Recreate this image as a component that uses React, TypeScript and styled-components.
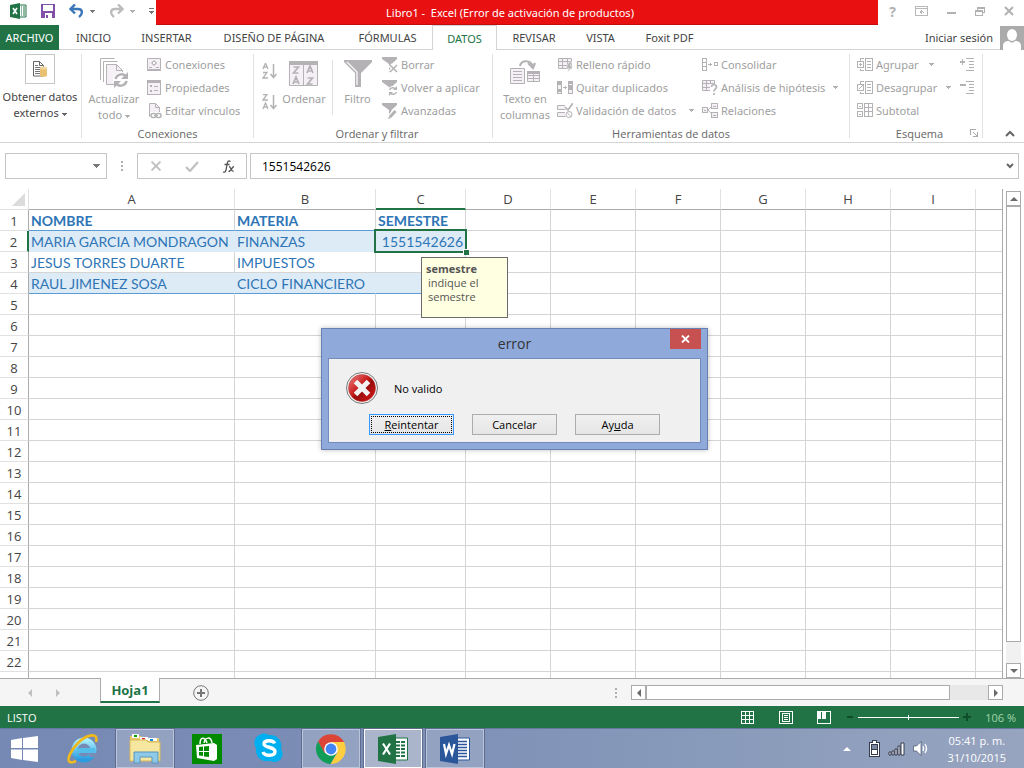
import React from "react";
import styled, { createGlobalStyle, css } from "styled-components";

const ui = `"Open Sans", "Noto Sans", sans-serif`;
const command = `"Noto Sans", "Open Sans", sans-serif`;
const sheet = `Lato, "Open Sans", sans-serif`;

const Global = createGlobalStyle`
  *, *::before, *::after { box-sizing: border-box; }
  html, body, #root { height: 100%; }
  body { margin: 0; font-family: ${ui}; font-size: 11px; color: #444; background: #fff; overflow: hidden; }
  button, input { font: inherit; color: inherit; margin: 0; padding: 0; border: 0; background: none; border-radius: 0; }
`;

const Window = styled.div`
  position: relative;
  display: flex;
  flex-direction: column;
  height: 100vh;
`;

/* ---------- title bar ---------- */
const TitleBar = styled.header`
  display: flex;
  height: 25px;
  font-family: ${command};
`;
const QuickAccess = styled.div`
  display: flex;
  align-items: center;
  width: 156px;
  padding-left: 10px;
  gap: 14px;
  padding-bottom: 3px;
`;
const QuickButton = styled.button`
  display: flex;
  align-items: center;
  gap: 6px;
`;
const TitleText = styled.h1`
  flex: 1;
  margin: 0;
  padding-right: 14px;
  background: #e81010;
  border-bottom: 1px solid #c40e0e;
  color: #fff;
  font-size: 11px;
  font-weight: 400;
  line-height: 25px;
  text-align: center;
  white-space: pre;
`;
const WindowButtons = styled.div`
  display: flex;
  width: 146px;
  padding-bottom: 3px;
`;
const WindowButton = styled.button`
  display: flex;
  flex: 1;
  align-items: center;
  justify-content: center;
  color: #b1b1b1;
  font-size: 14px;
  font-weight: 700;
`;

/* ---------- ribbon tabs ---------- */
const TabRow = styled.nav`
  display: flex;
  height: 25px;
  border-bottom: 1px solid #d4d4d4;
  font-family: ${command};
`;
const Tab = styled.button<{ $w: number; $kind?: "file" | "active" }>`
  width: ${(p) => p.$w}px;
  height: 25px;
  white-space: nowrap;
  ${(p) => p.$kind === "file" && css`background: #217346; color: #fff;`}
  ${(p) =>
    p.$kind === "active" &&
    css`
      background: #fff;
      color: #217346;
      border: 1px solid #d4d4d4;
      border-bottom: 0;
    `}
`;
const Account = styled.button`
  display: flex;
  align-items: center;
  gap: 7px;
  height: 25px;
  margin-left: auto;
`;

/* ---------- ribbon ---------- */
const Ribbon = styled.section`
  display: flex;
  height: 93px;
  padding-top: 4px;
  border-bottom: 1px solid #d4d4d4;
`;
const Group = styled.section<{ $w: number; $pad?: number }>`
  position: relative;
  display: flex;
  flex-direction: column;
  width: ${(p) => p.$w}px;
  height: 84px;
  padding-left: ${(p) => p.$pad || 0}px;
  border-right: 1px solid #e1e1e1;
`;
const GroupBody = styled.div`
  display: flex;
  flex: none;
  height: 72px;
  margin-top: -1px;
  font-family: ${command};
`;
const GroupLabel = styled.h2`
  flex: none;
  margin: 0;
  font-size: 11px;
  font-weight: 400;
  line-height: 18px;
  text-align: center;
  color: #666;
`;
const BigButton = styled.button<{ $w: number; $dark?: boolean }>`
  display: flex;
  flex-direction: column;
  align-items: center;
  width: ${(p) => p.$w}px;
  height: 72px;
  padding-top: ${(p) => (p.$dark ? 1 : 5)}px;
  gap: ${(p) => (p.$dark ? 5 : 3)}px;
  line-height: 16px;
  color: ${(p) => (p.$dark ? "#444" : "#a0a0a0")};
  white-space: nowrap;
  & span svg {
    vertical-align: middle;
  }
`;
const IconFrame = styled.span`
  display: flex;
  align-items: center;
  justify-content: center;
  width: 30px;
  height: 30px;
  border: 1px solid #c6c6c6;
`;
const IconSlot = styled.i`
  display: flex;
  align-items: center;
  height: 30px;
`;
const SmallColumn = styled.div<{ $w?: number }>`
  display: flex;
  flex-direction: column;
  width: ${(p) => (p.$w ? p.$w + "px" : "auto")};
`;
const SmallButton = styled.button`
  display: flex;
  align-items: center;
  gap: 3px;
  height: 23px;
  color: #a0a0a0;
  white-space: nowrap;
`;
const SmallLabel = styled.span<{ $w?: number }>`
  text-align: left;
  min-width: ${(p) => p.$w || 0}px;
`;
const SortColumn = styled.div`
  display: flex;
  flex-direction: column;
  justify-content: space-between;
  width: 20px;
  height: 57px;
  padding-top: 10px;
`;
const InnerRule = styled.span`
  width: 1px;
  height: 55px;
  margin-top: 7px;
  margin-left: 6px;
  background: #e1e1e1;
`;
const Launcher = styled.button`
  position: absolute;
  right: 4px;
  bottom: 0;
  height: 9px;
  display: flex;
`;
const Collapse = styled.button`
  align-self: flex-end;
  margin: 0 9px 5px auto;
  display: flex;
`;

/* ---------- formula bar ---------- */
const FormulaRow = styled.div`
  display: flex;
  height: 46px;
  padding: 10px 5px;
`;
const Box = styled.div<{ $w?: number; $ml?: number }>`
  display: flex;
  align-items: center;
  flex: ${(p) => (p.$w ? "none" : 1)};
  width: ${(p) => (p.$w ? p.$w + "px" : "auto")};
  height: 26px;
  margin-left: ${(p) => p.$ml || 0}px;
  border: 1px solid #c6c6c6;
`;
const NameInput = styled.input`
  flex: 1;
  min-width: 0;
  height: 22px;
  padding-left: 4px;
`;
const FormulaInput = styled.input`
  flex: 1;
  min-width: 0;
  height: 22px;
  padding-left: 11px;
  font-size: 12px;
  color: #000;
`;
const BarButton = styled.button`
  display: flex;
  justify-content: center;
  flex: 1;
`;
const ArrowButton = styled.button<{ $w: number }>`
  display: flex;
  align-items: center;
  justify-content: center;
  width: ${(p) => p.$w}px;
`;
const Grip = styled.span`
  display: flex;
  align-items: center;
  justify-content: center;
  width: 30px;
  height: 26px;
`;

/* ---------- sheet ---------- */
const SheetArea = styled.main`
  display: flex;
  flex: 1;
  min-height: 0;
`;
const GridView = styled.div`
  flex: 1;
  min-width: 0;
  border-right: 1px solid #ababab;
  overflow: hidden;
`;
const Grid = styled.table`
  width: 100%;
  table-layout: fixed;
  border-spacing: 0;
  font-family: ${sheet};
  font-size: 14px;
  color: #2e75b6;
`;
const ColHead = styled.th<{ $on?: boolean }>`
  height: 21px;
  padding: 0;
  border-right: 1px solid #e1e1e1;
  border-bottom: ${(p) => (p.$on ? "2px solid #217346" : "1px solid #ababab")};
  font-family: ${ui};
  font-size: 13px;
  line-height: 18px;
  font-weight: 400;
  color: #444;
  &:last-child {
    border-right: 0;
  }
`;
const Corner = styled(ColHead)`
  padding-left: 12px;
  border-bottom-color: #e1e1e1;
  line-height: 0;
  text-align: left;
`;
const RowHead = styled.th<{ $on?: boolean }>`
  height: 21px;
  padding: 2px 0 0;
  border-right: ${(p) => (p.$on ? "2px solid #217346" : "1px solid #ababab")};
  border-bottom: 1px solid #e1e1e1;
  font-family: ${ui};
  font-size: 13px;
  line-height: 18px;
  font-weight: 400;
  color: #444;
`;
const Cell = styled.td<{ $fill?: boolean; $bold?: boolean; $blue?: boolean; $active?: boolean }>`
  position: ${(p) => (p.$active ? "relative" : "static")};
  height: 21px;
  padding: 2px 2px 0;
  line-height: 18px;
  white-space: nowrap;
  text-align: ${(p) => (p.$active ? "right" : "left")};
  font-weight: ${(p) => (p.$bold ? 700 : 400)};
  background: ${(p) => (p.$fill ? "#ddebf7" : "#fff")};
  border-right: 1px solid ${(p) => (p.$fill ? "#ddebf7" : "#d4d4d4")};
  border-bottom: 1px solid ${(p) => (p.$blue ? "#5b9bd5" : p.$fill ? "#ddebf7" : "#d4d4d4")};
  &:last-child {
    border-right: 0;
  }
`;
const Selection = styled.span`
  position: absolute;
  z-index: 1;
  inset: -2px;
  border: 2px solid #217346;
  &::after {
    content: "";
    position: absolute;
    right: -4px;
    bottom: -4px;
    width: 6px;
    height: 6px;
    background: #217346;
    border: 1px solid #fff;
    border-width: 1px 0 0 1px;
  }
`;
const Hint = styled.div`
  position: absolute;
  z-index: 2;
  left: 45px;
  top: 26px;
  width: 87px;
  height: 61px;
  padding: 4px;
  border: 1px solid #6b6b6b;
  background: #ffffe1;
  font-family: ${ui};
  font-size: 11px;
  line-height: 14px;
  color: #555;
  text-align: left;
  white-space: normal;
`;
const HintText = styled.p`
  margin: 0;
  padding-left: 2px;
`;
const VScroll = styled.div`
  display: flex;
  flex-direction: column;
  width: 15px;
  margin: 2px 3px 0 3px;
  background: #f1f1f1;
`;
const HScroll = styled.div`
  display: flex;
  flex: 0 1 372px;
  height: 15px;
  margin-right: 21px;
  background: #e8e8e8;
`;
const ScrollButton = styled.button`
  display: flex;
  align-items: center;
  justify-content: center;
  flex: none;
  width: 15px;
  height: 15px;
  background: #fff;
  border: 1px solid #ababab;
`;
const ThumbTrack = styled.div<{ $end: number; $vertical?: boolean }>`
  display: flex;
  flex: 1;
  padding: ${(p) => (p.$vertical ? `0 0 ${p.$end}px` : `0 ${p.$end}px 0 0`)};
`;
const Thumb = styled.div`
  flex: 1;
  background: #fff;
  border: 1px solid #ababab;
`;

/* ---------- sheet tabs and status ---------- */
const SheetTabs = styled.div`
  display: flex;
  align-items: center;
  height: 28px;
  background: #f5f5f5;
  border-top: 1px solid #ababab;
`;
const TabArrows = styled.div`
  display: flex;
  justify-content: center;
  gap: 20px;
  width: 100px;
  padding-right: 13px;
`;
const PlainButton = styled.button`
  display: flex;
`;
const SheetTab = styled.button`
  align-self: flex-start;
  width: 60px;
  height: 25px;
  margin-top: -1px;
  background: #fff;
  border: solid #ababab;
  border-width: 0 1px 2px;
  border-bottom-color: #217346;
  color: #217346;
  font-size: 13px;
  font-weight: 700;
`;
const AddSheet = styled.button`
  display: flex;
  margin-left: 33px;
`;
const Spacer = styled.span`
  flex: 1;
`;
const StatusBar = styled.footer`
  display: flex;
  align-items: center;
  height: 22px;
  padding: 0 8px 0 7px;
  background: #217346;
  color: #fff;
`;
const Views = styled.div`
  display: flex;
  gap: 24px;
  margin-right: 14px;
`;
const ZoomStep = styled.button`
  width: 10px;
  display: flex;
  justify-content: center;
`;
const ZoomRange = styled.input`
  appearance: none;
  width: 101px;
  height: 7px;
  margin: 0 3px;
  background: linear-gradient(#fff, #fff) center / 100% 1px no-repeat;
  &::-webkit-slider-thumb {
    appearance: none;
    width: 1px;
    height: 5px;
    background: #fff;
  }
`;
const ZoomText = styled.span`
  width: 44px;
  text-align: right;
  color: #a3d3a9;
`;

/* ---------- task bar ---------- */
const TaskBar = styled.footer`
  display: flex;
  height: 40px;
  background: linear-gradient(90deg, #7589b4 0%, #7c8db5 35%, #8699ba 65%, #97a4bf 100%);
  border-top: 1px solid #66789f;
`;
const StartButton = styled.button`
  display: flex;
  align-items: center;
  justify-content: center;
  width: 48px;
  margin-right: 6px;
`;
const TaskButton = styled.button<{ $state?: "open" | "active" }>`
  display: flex;
  align-items: center;
  justify-content: center;
  width: 58px;
  height: 39px;
  margin-right: 4px;
  ${(p) =>
    p.$state &&
    css`
      background: ${p.$state === "active" ? "#aab4cb" : "#94a2c2"};
      border: 1px solid ${p.$state === "active" ? "#fff" : "#bac4da"};
      box-shadow: 0 0 0 1px #5d6c8f;
    `}
`;
const Tray = styled.div`
  display: flex;
  align-items: center;
  gap: 8px;
  margin-left: auto;
  padding-right: 18px;
  color: #fff;
`;
const TrayMore = styled.button`
  display: flex;
  margin-right: 10px;
`;
const Clock = styled.time`
  margin-left: 11px;
  font-size: 11px;
  line-height: 17px;
  text-align: center;
`;

/* ---------- dialog ---------- */
const Dialog = styled.div`
  position: absolute;
  z-index: 3;
  left: 321px;
  top: 328px;
  width: 387px;
  padding: 0 6px 6px;
  background: #8fa9db;
  border: 1px solid #6a80b0;
  box-shadow: 0 0 5px rgba(0, 0, 0, 0.25);
`;
const DialogTitle = styled.div`
  display: flex;
  height: 29px;
`;
const DialogName = styled.h2`
  flex: 1;
  margin: 0;
  padding-left: 31px;
  font-size: 14px;
  font-weight: 400;
  line-height: 30px;
  text-align: center;
  color: #333;
`;
const CloseButton = styled.button`
  display: flex;
  align-items: center;
  justify-content: center;
  width: 31px;
  height: 20px;
  background: #c75050;
`;
const DialogBody = styled.div`
  padding: 13px 17px 7px;
  background: #f0f0f0;
  border: 1px solid #748cba;
`;
const Message = styled.div`
  display: flex;
  align-items: center;
  gap: 16px;
  color: #000;
`;
const DialogButtons = styled.div`
  display: flex;
  gap: 18px;
  margin-top: 10px;
  padding-left: 23px;
`;
const DialogButton = styled.button<{ $focus?: boolean }>`
  width: 85px;
  height: 21px;
  padding: 1px;
  border: 1px solid ${(p) => (p.$focus ? "#3399ff" : "#acacac")};
  background: linear-gradient(#f0f0f0, #e5e5e5);
  color: #000;
  line-height: 15px;
`;
const FocusLine = styled.span<{ $focus?: boolean }>`
  display: block;
  border: 1px dotted ${(p) => (p.$focus ? "#000" : "transparent")};
`;

/* ---------- drawings ---------- */
type SvgProps = { w: number; h: number; children: React.ReactNode; soft?: boolean };
const Svg = ({ w, h, children, soft }: SvgProps) => (
  <svg width={w} height={h} viewBox={`0 0 ${w} ${h}`} fill="none" shapeRendering={soft ? "auto" : "crispEdges"} aria-hidden="true">
    {children}
  </svg>
);
const G = "#b5b2b5";
const P = "#f4f0f5";

const Down = ({ c = "#b0b0b0" }: { c?: string }) => (
  <Svg w={5} h={3}><path d="M0 0h5v1H0zM1 1h3v1H1zM2 2h1v1H2z" fill={c} /></Svg>
);
const BigDown = () => <Svg w={7} h={4}><path d="M0 0h7v1H0zM1 1h5v1H1zM2 2h3v1H2zM3 3h1v1H3z" fill="#777" /></Svg>;
const Tri = ({ dir, c = "#6a6a6a" }: { dir: "up" | "down" | "left" | "right"; c?: string }) => (
  <Svg w={8} h={8} soft>
    <path fill={c} d={{ up: "M0 6l4-4 4 4z", down: "M0 2h8l-4 4z", left: "M6 0v8l-4-4z", right: "M2 0v8l4-4z" }[dir]} />
  </Svg>
);
const Dots = () => <Svg w={2} h={10}><path d="M0 0h2v2H0zM0 4h2v2H0zM0 8h2v2H0z" fill="#b0b0b0" /></Svg>;

const ExcelMini = () => (
  <Svg w={17} h={16} soft>
    <path d="M9 2h7v12H9z" fill="#fff" stroke="#217346" />
    <path d="M11 4h1M13 4h2M11 6h1M13 6h2M11 8h1M13 8h2M11 10h1M13 10h2M11 12h1M13 12h2" stroke="#217346" />
    <path d="M0 2l10-2v16L0 14z" fill="#217346" />
    <path d="M3 5l4 6M7 5l-4 6" stroke="#fff" strokeWidth="1.6" />
  </Svg>
);
const Save = () => (
  <Svg w={14} h={14}>
    <path d="M0 0h14v14H0z" fill="#8250a8" /><path d="M2 1h10v6H2zM4 9h7v5H4z" fill="#fff" /><path d="M5 11h2v3H5z" fill="#8250a8" />
  </Svg>
);
const Undo = ({ c, flip }: { c: string; flip?: boolean }) => (
  <Svg w={15} h={14} soft>
    <g transform={flip ? "matrix(-1 0 0 1 15 0)" : undefined}>
      <path d="M2 5h7c5 0 5 5 1 8M6 .5L1.500 5 6 9.500" stroke={c} strokeWidth="2.400" />
    </g>
  </Svg>
);
const Customize = () => <Svg w={5} h={6}><path d="M0 0h5v1H0zM0 3h5v1H0zM1 4h3v1H1zM2 5h1v1H2z" fill="#777" /></Svg>;
const RibbonOptions = () => (
  <Svg w={13} h={10}><path d="M.5.5h12v9H.5zM.5 2.500h12M6.500 4v4M4.500 6h1M7.500 6h1M5 5.500h3" stroke="#b8b8b8" /></Svg>
);
const Restore = () => (
  <Svg w={10} h={9}><path d="M2.500 2.500v-2h7v5h-2M.5 3.500h7v5h-7zM0 3.500h8M2 .5h8" stroke="#b1b1b1" /><path d="M2 1h8M0 4h8" stroke="#b1b1b1" strokeWidth="1" /></Svg>
);
const CloseGrey = () => <Svg w={10} h={10} soft><path d="M1 1l8 8M9 1L1 9" stroke="#b1b1b1" strokeWidth="2" /></Svg>;
const Avatar = () => (
  <Svg w={24} h={24} soft>
    <path d="M0 0h24v24H0z" fill="#ababab" /><ellipse cx="12" cy="9" rx="5" ry="6" fill="#fff" />
    <path d="M3 24v-4c0-4 3-5 6-5 2 2 4 2 6 0 4 0 6 2 6 5v4z" fill="#fff" />
  </Svg>
);
const GetData = () => (
  <Svg w={14} h={16} soft>
    <path d="M.5.5h6l4 4V15H.5z" fill="#fff" stroke="#666" /><path d="M6.500.5v4h4" stroke="#666" />
    <path d="M2 4.500h3M2 6.500h6M2 8.500h5M2 10.500h5M2 12.500h5" stroke="#777" />
    <path d="M7 7h7v8c-1 1-6 1-7 0z" fill="#e9c173" /><ellipse cx="10.500" cy="7" rx="3.500" ry="1.500" fill="#f3d79d" />
  </Svg>
);
const RefreshAll = () => (
  <Svg w={30} h={30} soft>
    <path d="M1.500 22V.5h14M4.500 24V3.500h14" stroke={G} />
    <path d="M7.500 6.500h10l6 6v14h-16z" fill={P} stroke={G} /><path d="M17.500 6.500v6h6" stroke={G} />
    <circle cx="22" cy="22" r="8" fill="#fff" />
    <path d="M16.500 21a6 6 0 0 1 10-3M27.500 23a6 6 0 0 1-10 3" stroke={G} strokeWidth="2.500" />
    <path d="M29 14v7h-7zM15 30v-7h7z" fill={G} />
  </Svg>
);
const Connections = () => (
  <Svg w={16} h={14} soft>
    <path d="M1.500.5h13v11h-13z" fill={P} stroke={G} /><path d="M8 2l3 3-3 3-3-3z" fill={G} /><path d="M7 4h2v2H7z" fill="#fff" />
    <path d="M1 12.500h14M3 9.500h3M10 9.500h3" stroke={G} />
  </Svg>
);
const Properties = () => (
  <Svg w={16} h={15}>
    <path d="M1.500.5h13v14h-13z" fill={P} stroke={G} /><path d="M1 0h14v3H1z" fill={G} />
    <path d="M4 6.500h2M4 10.500h2M8 6.500h4M8 10.500h4M4 5.500h2M4 11.500h2" stroke={G} />
  </Svg>
);
const Links = () => (
  <Svg w={16} h={16} soft>
    <path d="M3.500.5h6l4 4v9h-10z" fill={P} stroke={G} /><path d="M9.500.5v4h4" stroke={G} />
    <path d="M4 9h12v7H4z" fill="#fff" />
    <rect x="5" y="10.500" width="5" height="4" rx="2" stroke={G} strokeWidth="1.500" /><rect x="10" y="10.500" width="5" height="4" rx="2" stroke={G} strokeWidth="1.500" />
    <path d="M8 12.500h4" stroke={G} />
  </Svg>
);
const A = (x: number, y: number) => `M${x} ${y + 6}l2.500-6 2.500 6M${x + 1} ${y + 4}h3`;
const Z = (x: number, y: number) => `M${x} ${y + 0.5}h4l-4 5.500h5`;
const SortIcon = ({ down }: { down?: boolean }) => (
  <Svg w={15} h={16} soft>
    <path d={down ? Z(1, 0) + A(1, 9) : A(1, 0) + Z(1, 9)} stroke={G} strokeWidth="1.300" />
    <path d="M11.500 1v13M8.500 11l3 3.500 3-3.500" stroke={G} strokeWidth="1.500" />
  </Svg>
);
const SortBig = () => (
  <Svg w={30} h={27} soft>
    <path d="M.5 1.500h28v24H.5z" fill={P} stroke={G} /><path d="M0 1h29v4H0zM14 5h1v21h-1z" fill={G} />
    <path d="M4.500 7h5l-5 6h5M4 24l3-7 3 7M5 22h4M18 13l3-7 3 7M19 11h4M18.500 18h5l-5 6h5" stroke={G} strokeWidth="1.700" />
  </Svg>
);
const Funnel = () => (
  <Svg w={28} h={28} soft><path d="M0 1h28v2L17 14v14h-6V14L0 3z" fill={G} /><path d="M3 3l10 10v13" stroke={P} strokeWidth="1.500" /></Svg>
);
const MiniFunnel = ({ mark }: { mark: "x" | "r" | "p" }) => (
  <Svg w={16} h={16} soft>
    <path d="M0 0h15v2L9.500 7v8H7V7L0 2z" fill={G} />
    {mark === "x" && <path d="M8 8l7 7M15 8l-7 7" stroke="#fff" strokeWidth="4" />}
    {mark === "x" && <path d="M8 8l7 7M15 8l-7 7" stroke={G} strokeWidth="1.500" />}
    {mark === "r" && <><circle cx="11" cy="11" r="5" fill="#fff" /><path d="M7.500 10a3.500 3.500 0 0 1 6-1M14.500 12a3.500 3.500 0 0 1-6 1" stroke={G} strokeWidth="1.400" /><path d="M15 6v4h-4zM7 16v-4h4z" fill={G} /></>}
    {mark === "p" && <><path d="M7 15l7-8" stroke="#fff" strokeWidth="5" /><path d="M8 14l5.500-6" stroke={G} strokeWidth="3" /><path d="M6 16l1-3 2 2z" fill={G} /></>}
  </Svg>
);
const TextColumns = () => (
  <Svg w={30} h={28} soft>
    <path d="M.5 9.500h14v15H.5z" fill={P} stroke={G} /><path d="M3 12.500h9M3 15.500h9M3 18.500h9M3 21.500h9" stroke={G} />
    <path d="M17.500 12.500h12v10h-12zM18 16.500h11M18 19.500h11M23.500 13v9" fill={P} stroke={G} /><path d="M17 12h13v3H17z" fill={G} />
    <path d="M10 7c1-6 11-7 13 1" stroke={G} strokeWidth="2.200" /><path d="M18 4l5 5 2-5" stroke={G} strokeWidth="2.200" />
  </Svg>
);
const FlashFill = () => (
  <Svg w={16} h={16} soft>
    <path d="M1.500 1.500h13v10h-13zM1 4.500h14M1 8.500h14M5.500 1v11M10.500 1v11" stroke={G} fill={P} />
    <path d="M12 5l-3 6h3l-2 5 6-7h-3l2-4z" fill={G} stroke="#fff" strokeWidth=".5" />
  </Svg>
);
const Duplicates = () => (
  <Svg w={16} h={14}>
    <path d="M.5.5h4v12h-4zM11.500.5h4v12h-4zM11 4.500h5M11 8.500h5" stroke={G} fill={P} /><path d="M0 0h5v4H0zM0 8h5v3H0zM11 0h5v3h-5zM11 5h5v3h-5zM6 6h4v1H6zM8 5h1v3H8z" fill={G} />
  </Svg>
);
const Validation = () => (
  <Svg w={16} h={15} soft>
    <path d="M8 2.500H.5v4h8M8 9.500H.5v4h8" stroke={G} fill={P} /><path d="M8 4l3 3 5-7" stroke={G} strokeWidth="1.700" />
    <circle cx="12" cy="11.500" r="3" stroke={G} /><path d="M10 9.500l4 4" stroke={G} />
  </Svg>
);
const Consolidate = () => (
  <Svg w={16} h={13}>
    <path d="M.5.5h4v12h-4zM0 4.500h5M0 8.500h5M6 6.500h4M12.500 4.500h3v3h-3z" stroke={G} /><path d="M8 5h1v3H8z" fill={G} />
  </Svg>
);
const WhatIf = () => (
  <Svg w={16} h={15} soft>
    <path d="M.5.5h12v10H.5zM0 3.500h13M0 7.500h13M4.500 0v11M8.500 0v11" stroke={G} fill={P} /><path d="M8 4h8v11H8z" fill="#fff" />
    <path d="M9.500 7c0-3 5-3 5 0 0 2-2.500 2-2.500 4.500M12 13v2" stroke={G} strokeWidth="1.700" />
  </Svg>
);
const Relations = () => (
  <Svg w={16} h={16}>
    <path d="M.5 4.500h5v5h-5zM9.500.5h6v5h-6zM9.500 9.500h6v5h-6zM6 7l4-4M6 7l4 4M2 7h2M11 3h3M11 12h3" stroke={G} fill={P} />
  </Svg>
);
const Outline = ({ kind }: { kind: "plus" | "slash" | "sub" }) => (
  <Svg w={16} h={15}>
    {kind !== "sub" && <path d="M8.500 1.500h7v12h-7zM10 4.500h4M10 7.500h4M10 10.500h4M7 1.500H3.500v2M7 13.500H3.500v-2" stroke={G} />}
    {kind === "plus" && <path d="M.5 4.500h6v6h-6zM2 7.500h3M3.500 6v3" stroke={G} />}
    {kind === "slash" && <path d="M.5 4.500h6v6h-6zM1.500 9.500l4-4" stroke={G} />}
    {kind === "sub" && <path d="M.5.5h5v5h-5zM.5 8.500h5v5h-5zM2 3.500h2M2 11.500h2M7.500.5h8v13h-8zM7 4.500h9M7 8.500h9M11.500 0v14" stroke={G} />}
  </Svg>
);
const Detail = ({ plus }: { plus?: boolean }) => (
  <Svg w={16} h={14}>
    <path d="M7 .5h8M10 3.500h5M10 6.500h5M10 9.500h5M7 12.500h8" stroke={G} /><path d={plus ? "M1 3h5v2H1zM3 1h1v6H3z" : "M1 3h6v2H1z"} fill={G} />
  </Svg>
);
const ErrorIcon = () => (
  <Svg w={32} h={32} soft>
    <defs><linearGradient id="red" x1="0" y1="0" x2="1" y2="1"><stop stopColor="#e88" /><stop offset=".45" stopColor="#c81a1a" /><stop offset=".55" stopColor="#970c0c" /><stop offset="1" stopColor="#e01818" /></linearGradient></defs>
    <circle cx="16" cy="16" r="15.500" fill="#f4f4f4" stroke="#777" /><circle cx="16" cy="16" r="13.500" fill="url(#red)" stroke="#a33" strokeWidth=".5" />
    <path d="M9.500 9.500l13 13M22.500 9.500l-13 13" stroke="#f2f2f2" strokeWidth="5" />
  </Svg>
);
const Windows = () => <Svg w={27} h={26} soft><path d="M0 4l11-2v10H0zM12 2l15-2v12H12zM0 13.500h11v10.500L0 22zM12 13.500h15V26l-15-2z" fill="#fff" /></Svg>;
const Explorer = () => (
  <Svg w={32} h={30} soft>
    <path d="M1 2h11l2 2h16v21H1z" fill="#e5ca6c" /><path d="M3 0h7v4H3z" fill="#fff" /><path d="M5 1h3v2H5z" fill="#0a0" /><path d="M11 3h8v3h-8z" fill="#fff" /><path d="M13 4h3v1.500h-3z" fill="#d22" /><path d="M19 4h9v3h-9z" fill="#fff" /><path d="M21 5h3v2h-3z" fill="#18d" />
    <path d="M1 6h16l2 2h12v19H1z" fill="#f6e6a0" stroke="#d9b856" /><path d="M5 29V18h24v11h-6v-6H11v6z" fill="#8fc9e8" stroke="#5796bd" />
  </Svg>
);
const InternetExplorer = () => (
  <Svg w={32} h={32} soft>
    <defs><linearGradient id="ie" x1="0" y1="0" x2="0" y2="1"><stop stopColor="#a5ecff" /><stop offset="1" stopColor="#2a9bdd" /></linearGradient></defs>
    <path d="M17 9c7 0 11 3 11 10H12" stroke="#1977b8" strokeWidth="0" />
    <circle cx="17" cy="17" r="9.500" stroke="url(#ie)" strokeWidth="6" />
    <path d="M10 15h18v5H10z" fill="#53bdec" /><path d="M21 20h9v4h-7z" fill="#7c8db5" />
    <path d="M29 9c3-10-9-8-18 1C4 17-1 27 3 29c2 1 4 0 6-1" stroke="#efb91d" strokeWidth="2.600" />
  </Svg>
);
const Store = () => (
  <Svg w={30} h={30} soft>
    <path d="M0 0h30v30H0z" fill="#008a00" /><path d="M4 11l18-2 3 2v14l-3 2L5 24z" fill="#fff" /><path d="M8 10c0-8 5-7 7-1M12 9c1-6 7-7 8 0" stroke="#fff" strokeWidth="1.500" />
    <path d="M7 13l4-.5v4.500H7zM12 12.500l5-.5v5h-5zM7 18h4v4l-4-.5zM12 18h5v5l-5-.5z" fill="#008a00" />
  </Svg>
);
const Skype = () => (
  <Svg w={30} h={31} soft>
    <path d="M8 1c3-1 5 0 6 1 9-1 15 6 13 14 5 8-3 16-11 12C7 30 1 23 2 15-2 9 2 2 8 1z" fill="#00aff0" />
    <path d="M20.500 10.500c-1-3.500-10.500-4-10.500.5 0 4 11 2.500 11 7.500 0 5-10.500 5-12 .5" stroke="#fff" strokeWidth="3.400" />
  </Svg>
);
const Chrome = () => (
  <Svg w={30} h={30} soft>
    <path d="M2 7.500A15 15 0 0 1 28 8H15L8.500 19z" fill="#db4437" /><path d="M28 8A15 15 0 0 1 14.500 30l7-11.500L15 8z" fill="#ffcd40" />
    <path d="M2 7.500A15 15 0 0 0 14.500 30l6-11-12 0z" fill="#0f9d58" /><circle cx="15" cy="15" r="6.800" fill="#fff" /><circle cx="15" cy="15" r="5.400" fill="#4285f4" />
  </Svg>
);
const Office = ({ c, word }: { c: string; word?: boolean }) => (
  <Svg w={30} h={30} soft>
    <path d="M17 4h12.500v22H17z" fill="#fff" stroke={c} />
    {word ? <path d="M18 7.500h9M18 10.500h9M18 13.500h9M18 16.500h9M18 19.500h9M18 22.500h9" stroke={c} strokeWidth="1.300" />
      : <path d="M18 8h4M23 8h4M18 11.500h4M23 11.500h4M18 15h4M23 15h4M18 18.500h4M23 18.500h4M18 22h4M23 22h4" stroke={c} strokeWidth="2" />}
    <path d="M0 3l18-3v30L0 27z" fill={c} />
    <path d={word ? "M4 10l2 10 3-9 3 9 2.500-10" : "M5 9.500l7 11M12 9.500l-7 11"} stroke="#fff" strokeWidth="2.200" />
  </Svg>
);
const Battery = () => (
  <Svg w={11} h={17}>
    <path d="M3 0h5v2h3v15H0V2h3z" fill="#343b4e" /><path d="M4 1h3v2h3v13H1V3h3z" fill="#fff" /><path d="M2 4h7v11H2z" fill="#343b4e" /><path d="M3 10h5v4H3z" fill="#fff" /><path d="M3 5h5v4H3z" fill="#7d879f" />
  </Svg>
);
const Signal = () => <Svg w={17} h={14} soft><path d="M1 10h2v3H1zM4 9h2v4H4zM7 7h2v6H7zM10 4h2v9h-2zM13 1h3v12h-3z" fill="#fff" stroke="#343b4e" /></Svg>;
const Speaker = () => <Svg w={16} h={15} soft><path d="M.5 5h3L8 .5v14L3.500 10h-3z" fill="#fff" stroke="#444f68" strokeWidth=".7" /><path d="M10 5c1 2 1 3 0 5M12 3c2 3 2 6 0 9" stroke="#fff" strokeWidth="1.300" /></Svg>;

/* ---------- data ---------- */
const columns: [string, number][] = [["A", 206], ["B", 141], ["C", 90], ["D", 85], ["E", 85], ["F", 85], ["G", 85], ["H", 85], ["I", 85]];
const rows = [
  ["NOMBRE", "MATERIA", "SEMESTRE"],
  ["MARIA GARCIA MONDRAGON", "FINANZAS", "1551542626"],
  ["JESUS TORRES DUARTE", "IMPUESTOS", ""],
  ["RAUL JIMENEZ SOSA", "CICLO FINANCIERO", ""],
];

const Small = ({ icon, text, arrow, w }: { icon: React.ReactNode; text: string; arrow?: boolean; w?: number }) => (
  <SmallButton>{icon}<SmallLabel $w={w}>{text}</SmallLabel>{arrow && <Down />}</SmallButton>
);

export default function App() {
  return (
    <Window>
      <Global />
      <TitleBar>
        <QuickAccess>
          <ExcelMini />
          <QuickButton aria-label="Guardar"><Save /></QuickButton>
          <QuickButton aria-label="Deshacer"><Undo c="#3b76b8" /><Down c="#777" /></QuickButton>
          <QuickButton aria-label="Rehacer"><Undo c="#bcbcbc" flip /><Down /></QuickButton>
          <QuickButton aria-label="Personalizar"><Customize /></QuickButton>
        </QuickAccess>
        <TitleText>{"Libro1 -  Excel (Error de activación de productos)"}</TitleText>
        <WindowButtons>
          <WindowButton aria-label="Ayuda de Excel">?</WindowButton>
          <WindowButton aria-label="Opciones de cinta"><RibbonOptions /></WindowButton>
          <WindowButton aria-label="Minimizar"><Svg w={9} h={6}><path d="M0 4h9v2H0z" fill="#b1b1b1" /></Svg></WindowButton>
          <WindowButton aria-label="Restaurar"><Restore /></WindowButton>
          <WindowButton aria-label="Cerrar"><CloseGrey /></WindowButton>
        </WindowButtons>
      </TitleBar>

      <TabRow>
        <Tab $w={59} $kind="file">ARCHIVO</Tab>
        <Tab $w={69}>INICIO</Tab>
        <Tab $w={77}>INSERTAR</Tab>
        <Tab $w={138}>DISEÑO DE PÁGINA</Tab>
        <Tab $w={89}>FÓRMULAS</Tab>
        <Tab $w={65} $kind="active">DATOS</Tab>
        <Tab $w={74}>REVISAR</Tab>
        <Tab $w={59}>VISTA</Tab>
        <Tab $w={79}>Foxit PDF</Tab>
        <Account>Iniciar sesión<Avatar /></Account>
      </TabRow>

      <Ribbon>
        <Group $w={82}>
          <GroupBody>
            <BigButton $w={80} $dark>
              <IconFrame><GetData /></IconFrame>
              <span>Obtener datos<br />externos <Down c="#666" /></span>
            </BigButton>
          </GroupBody>
        </Group>
        <Group $w={172}>
          <GroupBody>
            <BigButton $w={64}>
              <IconSlot><RefreshAll /></IconSlot>
              <span>Actualizar<br />todo <Down /></span>
            </BigButton>
            <SmallColumn>
              <Small icon={<Connections />} text="Conexiones" />
              <Small icon={<Properties />} text="Propiedades" />
              <Small icon={<Links />} text="Editar vínculos" />
            </SmallColumn>
          </GroupBody>
          <GroupLabel>Conexiones</GroupLabel>
        </Group>
        <Group $w={239} $pad={8}>
          <GroupBody>
            <SortColumn>
              <PlainButton aria-label="Ordenar de A a Z"><SortIcon /></PlainButton>
              <PlainButton aria-label="Ordenar de Z a A"><SortIcon down /></PlainButton>
            </SortColumn>
            <BigButton $w={44}><IconSlot><SortBig /></IconSlot><span>Ordenar</span></BigButton>
            <InnerRule />
            <BigButton $w={49}><IconSlot><Funnel /></IconSlot><span>Filtro</span></BigButton>
            <SmallColumn>
              <Small icon={<MiniFunnel mark="x" />} text="Borrar" />
              <Small icon={<MiniFunnel mark="r" />} text="Volver a aplicar" />
              <Small icon={<MiniFunnel mark="p" />} text="Avanzadas" />
            </SmallColumn>
          </GroupBody>
          <GroupLabel>Ordenar y filtrar</GroupLabel>
        </Group>
        <Group $w={357}>
          <GroupBody>
            <BigButton $w={64}><IconSlot><TextColumns /></IconSlot><span>Texto en<br />columnas</span></BigButton>
            <SmallColumn $w={145}>
              <Small icon={<FlashFill />} text="Relleno rápido" />
              <Small icon={<Duplicates />} text="Quitar duplicados" />
              <Small icon={<Validation />} text="Validación de datos" w={110} arrow />
            </SmallColumn>
            <SmallColumn>
              <Small icon={<Consolidate />} text="Consolidar" />
              <Small icon={<WhatIf />} text="Análisis de hipótesis" w={109} arrow />
              <Small icon={<Relations />} text="Relaciones" />
            </SmallColumn>
          </GroupBody>
          <GroupLabel>Herramientas de datos</GroupLabel>
        </Group>
        <Group $w={133} $pad={7}>
          <GroupBody>
            <SmallColumn $w={102}>
              <Small icon={<Outline kind="plus" />} text="Agrupar" w={50} arrow />
              <Small icon={<Outline kind="slash" />} text="Desagrupar" w={67} arrow />
              <Small icon={<Outline kind="sub" />} text="Subtotal" />
            </SmallColumn>
            <SmallColumn>
              <SmallButton aria-label="Mostrar detalle"><Detail plus /></SmallButton>
              <SmallButton aria-label="Ocultar detalle"><Detail /></SmallButton>
            </SmallColumn>
          </GroupBody>
          <GroupLabel>Esquema</GroupLabel>
          <Launcher aria-label="Configuración de esquema">
            <Svg w={8} h={8}><path d="M.5 6V.5H6M3 3l4 4M7.500 3v4.500H3" stroke="#aaa" /></Svg>
          </Launcher>
        </Group>
        <Collapse aria-label="Contraer la cinta"><Svg w={10} h={7} soft><path d="M1 6l4-4 4 4" stroke="#666" strokeWidth="2" /></Svg></Collapse>
      </Ribbon>

      <FormulaRow>
        <Box $w={102}>
          <NameInput aria-label="Cuadro de nombres" />
          <ArrowButton $w={20} aria-label="Lista de nombres"><BigDown /></ArrowButton>
        </Box>
        <Grip><Dots /></Grip>
        <Box $w={110}>
          <BarButton aria-label="Cancelar entrada"><Svg w={12} h={10} soft><path d="M1.500.5l9 9M10.500.5l-9 9" stroke="#c0c0c0" strokeWidth="1.800" /></Svg></BarButton>
          <BarButton aria-label="Introducir"><Svg w={14} h={11} soft><path d="M1 6l4 4 8-9" stroke="#c0c0c0" strokeWidth="2.200" /></Svg></BarButton>
          <BarButton aria-label="Insertar función">
            <Svg w={13} h={13} soft><path d="M8.500 1.500c-2-1.500-3 0-3.500 3L4 10c-.5 2-1.500 2.500-3 2M2.500 4.500h5M7 6.500c2 0 2 5 4.500 5M12 6.500c-2 0-3 5-5.500 5" stroke="#555" strokeWidth="1.300" /></Svg>
          </BarButton>
        </Box>
        <Box $ml={3}>
          <FormulaInput aria-label="Barra de fórmulas" defaultValue="1551542626" />
          <ArrowButton $w={17} aria-label="Expandir barra"><Svg w={8} h={6} soft><path d="M1 1l3 3 3-3" stroke="#666" strokeWidth="2" /></Svg></ArrowButton>
        </Box>
      </FormulaRow>

      <SheetArea>
        <GridView>
          <Grid>
            <colgroup>
              <col width={29} />
              {columns.map(([name, w]) => <col key={name} width={w} />)}
              <col />
            </colgroup>
            <thead>
              <tr>
                <Corner><Svg w={13} h={13} soft><path d="M13 0v13H0z" fill="#dcdcdc" /></Svg></Corner>
                {columns.map(([name]) => <ColHead key={name} scope="col" $on={name === "C"}>{name}</ColHead>)}
                <ColHead />
              </tr>
            </thead>
            <tbody>
              {Array.from({ length: 22 }, (_, r) => (
                <tr key={r}>
                  <RowHead scope="row" $on={r === 1}>{r + 1}</RowHead>
                  {columns.map(([name], c) => {
                    const text = rows[r]?.[c] ?? "";
                    const selected = r === 1 && c === 2;
                    return (
                      <Cell key={name} $fill={c < 3 && (r === 1 || r === 3)} $bold={r === 0} $blue={c < 3 && (r === 0 || r === 3)} $active={selected}>
                        {text}
                        {selected && <Selection />}
                        {selected && <Hint role="tooltip"><strong>semestre</strong><HintText>indique el semestre</HintText></Hint>}
                      </Cell>
                    );
                  })}
                  <Cell />
                </tr>
              ))}
              <tr><RowHead />{columns.map(([name]) => <Cell key={name} />)}<Cell /></tr>
            </tbody>
          </Grid>
        </GridView>
        <VScroll>
          <ScrollButton aria-label="Subir"><Tri dir="up" /></ScrollButton>
          <ThumbTrack $end={21} $vertical><Thumb /></ThumbTrack>
          <ScrollButton aria-label="Bajar"><Tri dir="down" /></ScrollButton>
        </VScroll>
      </SheetArea>

      <SheetTabs>
        <TabArrows>
          <PlainButton aria-label="Hoja anterior"><Tri dir="left" c="#c0c0c0" /></PlainButton>
          <PlainButton aria-label="Hoja siguiente"><Tri dir="right" c="#c0c0c0" /></PlainButton>
        </TabArrows>
        <SheetTab>Hoja1</SheetTab>
        <AddSheet aria-label="Hoja nueva"><Svg w={16} h={16} soft><circle cx="8" cy="8" r="7.300" stroke="#777" /><path d="M4 8h8M8 4v8" stroke="#777" strokeWidth="2" /></Svg></AddSheet>
        <Spacer />
        <Grip><Dots /></Grip>
        <HScroll>
          <ScrollButton aria-label="Izquierda"><Tri dir="left" /></ScrollButton>
          <ThumbTrack $end={38}><Thumb /></ThumbTrack>
          <ScrollButton aria-label="Derecha"><Tri dir="right" /></ScrollButton>
        </HScroll>
      </SheetTabs>

      <StatusBar>
        <span>LISTO</span>
        <Spacer />
        <Views>
          <PlainButton aria-label="Normal"><Svg w={14} h={13}><path d="M.5.5h12v12H.5zM4.500 0v13M8.500 0v13M0 4.500h13M0 8.500h13" stroke="#fff" /></Svg></PlainButton>
          <PlainButton aria-label="Diseño de página"><Svg w={14} h={13}><path d="M.5.5h13v12H.5zM3.500 2.500h7v8h-7zM5 4.500h4M5 6.500h4M5 8.500h4" stroke="#fff" /></Svg></PlainButton>
          <PlainButton aria-label="Salto de página"><Svg w={14} h={13}><path d="M.5.5h13v12H.5z" stroke="#fff" /><path d="M0 0h4v8H0zM5 0h4v8H5z" fill="#fff" /></Svg></PlainButton>
        </Views>
        <ZoomStep aria-label="Alejar"><Svg w={6} h={2}><path d="M0 0h6v2H0z" fill="#0e4d29" /></Svg></ZoomStep>
        <ZoomRange type="range" aria-label="Zoom" defaultValue={50} />
        <ZoomStep aria-label="Acercar"><Svg w={8} h={8}><path d="M0 3h8v2H0zM3 0h2v8H3z" fill="#0e4d29" /></Svg></ZoomStep>
        <ZoomText>106 %</ZoomText>
      </StatusBar>

      <TaskBar>
        <StartButton aria-label="Inicio"><Windows /></StartButton>
        <TaskButton aria-label="Internet Explorer"><InternetExplorer /></TaskButton>
        <TaskButton aria-label="Explorador" $state="open"><Explorer /></TaskButton>
        <TaskButton aria-label="Tienda"><Store /></TaskButton>
        <TaskButton aria-label="Skype"><Skype /></TaskButton>
        <TaskButton aria-label="Chrome" $state="open"><Chrome /></TaskButton>
        <TaskButton aria-label="Excel" $state="active"><Office c="#217346" /></TaskButton>
        <TaskButton aria-label="Word" $state="open"><Office c="#2b579a" word /></TaskButton>
        <Tray>
          <TrayMore aria-label="Iconos ocultos"><Tri dir="up" c="#fff" /></TrayMore>
          <Battery />
          <Signal />
          <Speaker />
          <Clock>05:41 p. m.<br />31/10/2015</Clock>
        </Tray>
      </TaskBar>

      <Dialog role="dialog" aria-labelledby="dialog-title">
        <DialogTitle>
          <DialogName id="dialog-title">error</DialogName>
          <CloseButton aria-label="Cerrar"><Svg w={9} h={8} soft><path d="M1 .5l7 7M8 .5l-7 7" stroke="#fff" strokeWidth="1.800" /></Svg></CloseButton>
        </DialogTitle>
        <DialogBody>
          <Message><ErrorIcon />No valido</Message>
          <DialogButtons>
            <DialogButton $focus><FocusLine $focus><u>R</u>eintentar</FocusLine></DialogButton>
            <DialogButton><FocusLine>Cancelar</FocusLine></DialogButton>
            <DialogButton><FocusLine>Ay<u>u</u>da</FocusLine></DialogButton>
          </DialogButtons>
        </DialogBody>
      </Dialog>
    </Window>
  );
}
